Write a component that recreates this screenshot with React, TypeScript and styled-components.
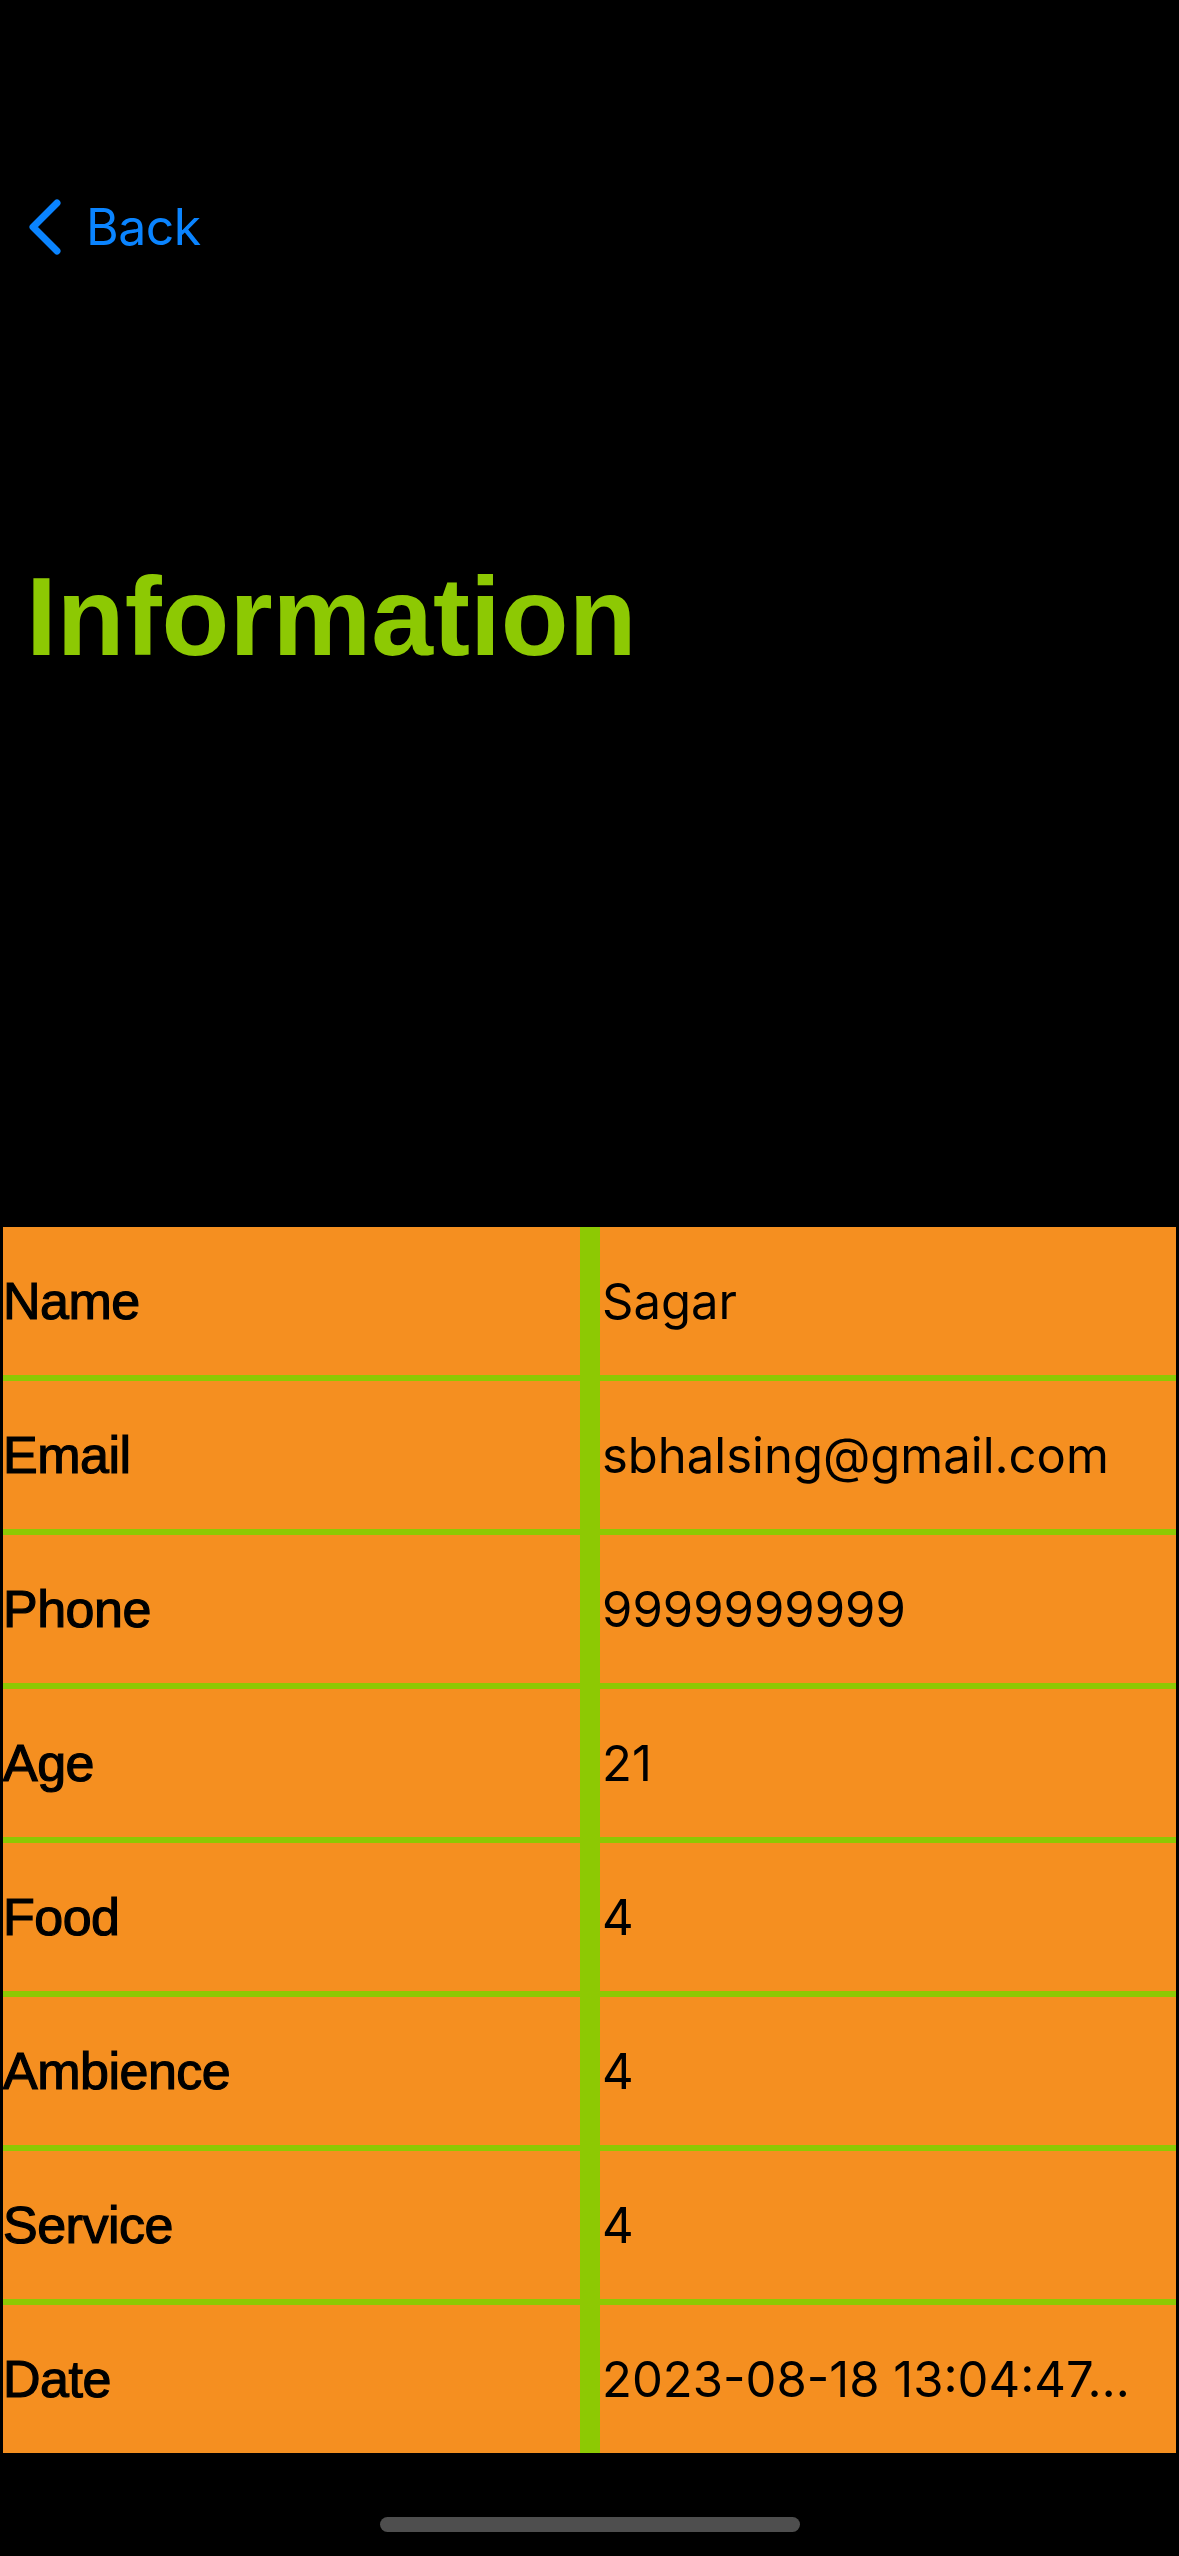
import React from "react";
import styled, { createGlobalStyle } from "styled-components";

const GlobalStyle = createGlobalStyle`
  html, body {
    margin: 0;
    padding: 0;
    background: #000000;
  }
  * { box-sizing: border-box; }
`;

const Page = styled.div`
  width: 1179px;
  height: 2556px;
  background: #000000;
  display: flex;
  flex-direction: column;
  overflow: hidden;
`;

const NavBar = styled.div`
  display: flex;
  align-items: center;
  padding: 199px 0 0 28px;
`;

const BackButton = styled.button`
  display: flex;
  align-items: center;
  gap: 24px;
  height: 56px;
  padding: 0;
  border: none;
  background: transparent;
  color: #0a84ff;
  font-family: Inter, "Noto Sans", sans-serif;
  font-size: 50px;
  line-height: 56px;
  letter-spacing: -0.5px;
  cursor: pointer;
`;

const Title = styled.h1`
  margin: 307px 0 0 0;
  padding-left: 26px;
  font-family: "Liberation Sans", Arial, sans-serif;
  font-weight: 700;
  font-size: 111px;
  line-height: 111px;
  letter-spacing: 0;
  color: #8dc903;
`;

const Table = styled.div`
  margin: 554px 0 0 3px;
  width: 1173px;
  display: grid;
  grid-template-columns: 577px 576px;
  grid-auto-rows: 148px;
  column-gap: 20px;
  row-gap: 6px;
  background: #8dc903;
`;

const Cell = styled.div<{ $kind: "label" | "value" }>`
  background: #f58f20;
  display: flex;
  align-items: center;
  min-width: 0;
  color: #000000;
  padding: ${(p) => (p.$kind === "label" ? "0" : "0 12px 0 2px")};
  font-family: ${(p) =>
    p.$kind === "label"
      ? `"Liberation Sans", Arial, sans-serif`
      : `Inter, "Noto Sans", sans-serif`};
  font-size: ${(p) => (p.$kind === "label" ? "52px" : "49px")};
  letter-spacing: ${(p) => (p.$kind === "label" ? "-0.5px" : "0")};
  -webkit-text-stroke: ${(p) => (p.$kind === "label" ? "1.2px #000" : "0")};
`;

const CellText = styled.span`
  display: block;
  white-space: nowrap;
  overflow: hidden;
  text-overflow: ellipsis;
  min-width: 0;
`;

const HomeIndicator = styled.div`
  align-self: center;
  margin-top: 64px;
  width: 420px;
  height: 15px;
  border-radius: 8px;
  background: #4e4e4e;
`;

const Chevron = () => (
  <svg width="34" height="56" viewBox="0 0 34 56" fill="none">
    <path
      d="M29 4 L5 28 L29 52"
      stroke="#0a84ff"
      strokeWidth="7"
      strokeLinecap="round"
      strokeLinejoin="round"
    />
  </svg>
);

const rows: [string, string][] = [
  ["Name", "Sagar"],
  ["Email", "sbhalsing@gmail.com"],
  ["Phone", "9999999999"],
  ["Age", "21"],
  ["Food", "4"],
  ["Ambience", "4"],
  ["Service", "4"],
  ["Date", "2023-08-18 13:04:47…"],
];

export default function App() {
  return (
    <>
      <GlobalStyle />
      <Page>
        <NavBar>
          <BackButton>
            <Chevron />
            <span>Back</span>
          </BackButton>
        </NavBar>
        <Title>Information</Title>
        <Table>
          {rows.map(([label, value]) => (
            <React.Fragment key={label}>
              <Cell $kind="label">
                <CellText>{label}</CellText>
              </Cell>
              <Cell $kind="value">
                <CellText>{value}</CellText>
              </Cell>
            </React.Fragment>
          ))}
        </Table>
        <HomeIndicator />
      </Page>
    </>
  );
}
